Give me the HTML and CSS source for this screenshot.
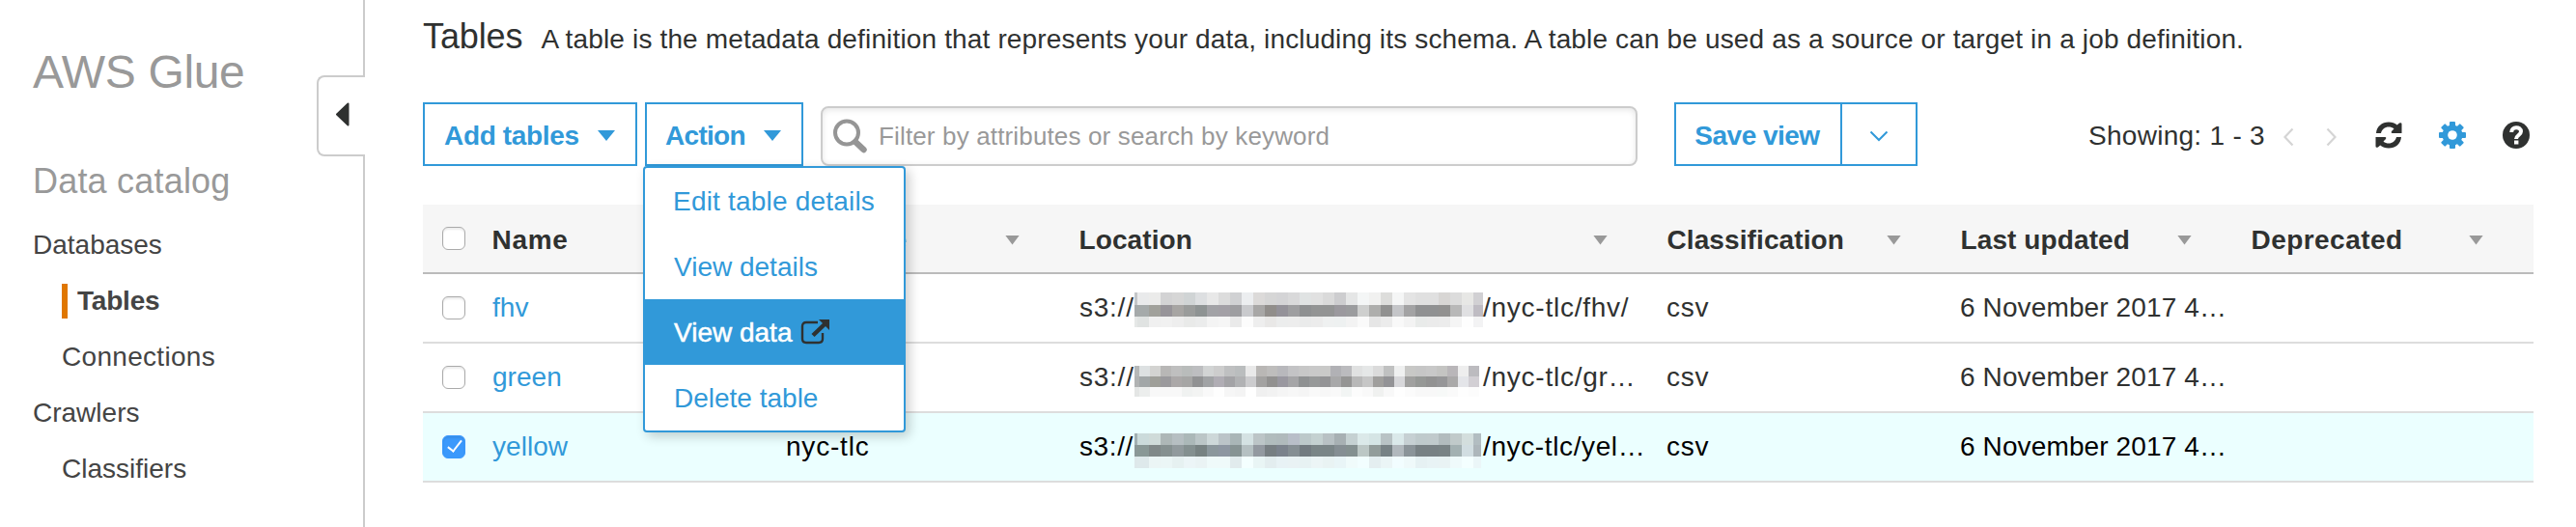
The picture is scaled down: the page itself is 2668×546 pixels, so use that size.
FILE: index.html
```
<!DOCTYPE html>
<html lang="en">
<head>
<meta charset="utf-8">
<title>AWS Glue – Tables</title>
<link rel="stylesheet" href="styles.css">
</head>
<body>
<aside class="sidebar">
  <h1 class="brand">AWS Glue</h1>
  <button class="collapse" aria-label="Collapse">
    <svg width="14" height="25" viewBox="0 0 14 25"><path d="M12.500 1.500v22L1 12.500z" fill="#2f3130" stroke="#2f3130" stroke-width="2" stroke-linejoin="round"/></svg>
  </button>
  <h2 class="group">Data catalog</h2>
  <nav class="nav">
    <a>Databases</a>
    <a class="sub active">Tables</a>
    <a class="sub wide">Connections</a>
    <a>Crawlers</a>
    <a class="sub">Classifiers</a>
  </nav>
</aside>
<main class="main">
  <header class="intro"><h2 class="title">Tables</h2><p class="desc">A table is the metadata definition that represents your data, including its schema. A table can be used as a source or target in a job definition.</p></header>
  <div class="toolbar">
    <button class="btn add">Add tables<i class="caret"></i></button>
    <div class="dropdown">
      <button class="btn action">Action<i class="caret"></i></button>
      <ul class="menu">
        <li>Edit table details</li>
        <li class="tight">View details</li>
        <li class="current">View data
          <svg width="32" height="28" viewBox="0 0 32 28" fill="none" stroke="#2f3130"><path d="M18 4H6Q2 4 2 8v13q0 4 4 4h13q4 0 4-4v-6" stroke-width="2.400"/><path d="M13 17.500L25 6" stroke-width="4.500"/><path d="M19 1h11v11z" fill="#2f3130" stroke="none"/></svg>
        </li>
        <li class="tight">Delete table</li>
      </ul>
    </div>
    <label class="search">
      <svg width="36" height="36" viewBox="0 0 36 36" fill="none" stroke="#959595"><circle cx="14" cy="14.500" r="12" stroke-width="4"/><path d="M23 24l8.500 8" stroke-width="6.500" stroke-linecap="round"/></svg>
      <span>Filter by attributes or search by keyword</span>
    </label>
    <div class="split"><button class="save">Save view</button><button class="more" aria-label="More"><svg width="20" height="12" viewBox="0 0 20 12" fill="none" stroke="#3199d9" stroke-width="2"><path d="M1.500 1.500L10 10l8.500-8.500"/></svg></button></div>
    <div class="status">
      <span class="count">Showing: 1 - 3</span>
      <svg class="prev" width="11" height="20" viewBox="0 0 11 20" fill="none" stroke="#d5d5d5" stroke-width="2.200"><path d="M9.500 1.500L1.500 10l8 8.500"/></svg>
      <svg class="next" width="11" height="20" viewBox="0 0 11 20" fill="none" stroke="#d5d5d5" stroke-width="2.200"><path d="M1.500 1.500l8 8.500-8 8.500"/></svg>
      <svg class="refresh" width="28" height="28" viewBox="0 0 28 28" fill="#2f3130"><path d="M1 12C1.500 5 7 0.500 14 0.500c3.500 0 6.500 1 8.800 3L25 1.500Q27.500 0.500 27.500 2.500V12H17.500Q16 11.500 17 10l2.500-2.500C18 6 16 5.500 14 5.500c-4 0-7 2.500-8 6.500z"/><path d="M27 16C26.500 23 21 27.500 14 27.500c-3.500 0-6.500-1-8.800-3L3 26.500Q0.500 27.500 0.500 25.500V16H10.500Q12 16.500 11 18l-2.500 2.500C10 22 12 22.500 14 22.500c4 0 7-2.500 8-6.500z"/></svg>
      <svg class="gear" width="28" height="28" viewBox="-14 -14 28 28" fill="#3199d9"><rect x="-3" y="-14" width="6" height="28" rx="1"/><rect x="-14" y="-3" width="28" height="6" rx="1"/><rect x="-3" y="-14" width="6" height="28" rx="1" transform="rotate(45)"/><rect x="-3" y="-14" width="6" height="28" rx="1" transform="rotate(-45)"/><circle r="10.500"/><circle r="4.800" fill="#fff"/></svg>
      <svg class="help" width="28" height="28" viewBox="0 0 28 28"><circle cx="14" cy="14" r="14" fill="#2f3130"/><path d="M9.200 11C9 4.800 19 4.500 19 10.300c0 3.700-5 3.700-5 7.700" fill="none" stroke="#fff" stroke-width="4"/><path d="M12 19.500h4.400v4H12z" fill="#fff"/></svg>
    </div>
  </div>
  <section class="table">
    <div class="row head">
      <input type="checkbox" class="check" aria-label="Select all">
      <span class="cell name-h">Name</span>
      <span class="cell db-h">Database<i class="sort"></i></span>
      <span class="cell">Location<i class="sort"></i></span>
      <span class="cell">Classification<i class="sort"></i></span>
      <span class="cell">Last updated<i class="sort"></i></span>
      <span class="cell dep">Deprecated<i class="sort"></i></span>
    </div>
    <div class="row">
      <input type="checkbox" class="check" aria-label="Select fhv">
      <a class="cell link">fhv</a>
      <span class="cell db"></span>
      <span class="cell loc"><span class="scheme">s3://</span><svg class="mask" width="361" height="50" data-mask="fhv"></svg>/nyc-tlc/fhv/</span>
      <span class="cell csv">csv</span>
      <span class="cell date">6 November 2017 4…</span>
      <span class="cell"></span>
    </div>
    <div class="row">
      <input type="checkbox" class="check" aria-label="Select green">
      <a class="cell link">green</a>
      <span class="cell db"></span>
      <span class="cell loc"><span class="scheme">s3://</span><svg class="mask" width="361" height="50" data-mask="green"></svg>/nyc-tlc/gr…</span>
      <span class="cell csv">csv</span>
      <span class="cell date">6 November 2017 4…</span>
      <span class="cell"></span>
    </div>
    <div class="row selected">
      <input type="checkbox" class="check" aria-label="Select yellow" checked>
      <a class="cell link">yellow</a>
      <span class="cell db">nyc-tlc</span>
      <span class="cell loc"><span class="scheme">s3://</span><svg class="mask" width="361" height="50" data-mask="yellow"></svg>/nyc-tlc/yel…</span>
      <span class="cell csv">csv</span>
      <span class="cell date">6 November 2017 4…</span>
      <span class="cell"></span>
    </div>
  </section>
</main>
<script src="mask.js"></script>
</body>
</html>
```
FILE: mask.js
```
// Pixelated masks over the private bucket names: one colour per mosaic block.
const masks = {
  fhv: { x: 3, step: 12, end: 361, ys: [9, 22, 34, 45], edge: ['c4c6c8', 'a5a9aa', 'e6e8e7'], rows: [
    'e9eaeb,ebebea,d3d3d4,d6d6d6,d0d4d5,dddfe1,e8e8e8,dcdcdc,d0d1d3,eceef0,dcdad9,d6d6d6,d4d4d6,d9d9da,e0e3e3,e1e1e1,dadada,cdcdcf,e5e6e6,f4f6f6,f1f1f0,dddddb,f5f6f6,e4e4e4,e0e0e0,e0e0e0,d8d6d4,dcdcdc,e7e7e5,d1d0d3',
    'a5aaaa,a1a19b,979499,a7a5a3,9a9c9b,8e9393,a2a2a6,a3a0a6,9e9ea1,c9cacd,a8a7a6,918e8b,949299,9e9ea0,8e9091,939494,939494,9b999e,9b9c9e,cecfce,aeaeac,919190,c4c5c8,a3a3a4,909192,909192,929190,b8b8b8,e0e0e2,bfbcc3',
    'e0e3e2,f0f0f0,f1f1f1,eeeeee,e9eae9,ebecec,f4f4f4,f6f6f6,eaeaea,fcfcfc,eeeeee,e9e8e7,eceded,ededed,eaebeb,ececec,eff1f1,eef1f1,f3f3f3,fafafa,e6e6e6,ececec,f9f9f9,f3f3f3,e9ebea,ebebeb,ececec,f5f5f5,fefefe,f3f3f4'] },
  green: { x: 5, step: 11, end: 358, ys: [13, 24, 35, 45], edge: ['b6b8b8', 'b0b2b2', 'e4e6e5'], rows: [
    'dde1e2,d3d3d1,b8b7b6,bfbfbf,b9bcbb,bdbec0,d2d4d4,cdcdcd,bfc0c1,babdbe,e9e9e9,b9b7b5,bebdbc,b8b8bc,c3c3c5,c7c7c7,c9c9c9,c9c9c8,b1b1b5,bbbbbe,e0e1e1,e5e7e7,dbdbdb,c0c1c1,eff0f0,c8c8c6,c6c6c6,c8c8c8,c4c4c2,b9b6b9,eeeeee,bcbbbf',
    'a2a7a8,9f9f99,9b9a9d,aba8a8,a6a6a5,919293,a1a3a5,b0adb4,a3a3a6,b1b2b4,ccccce,a3a2a1,929190,9a98a0,a5a5a7,8f9192,979999,939395,a8a8a9,959594,b8b8b8,c6c6c6,a09f9d,939396,d7d7da,a0a09f,969896,929292,969698,aaa9a9,e4e5e9,d2cfd4',
    'eceeed,f8f8f8,f8f8f8,f8f8f8,f0f2f1,f3f4f3,f9f9f9,fefefe,f6f6f6,f4f4f4,ffffff,f0f0f0,f2f2f2,f5f5f5,f7f7f7,f5f5f5,f9f9f9,f7f7f7,f9f9f9,f2f5f4,fcfcfc,f9f9f9,f0f1f0,f8f8f8,fefefe,fbfbfb,f8f8f8,f8f8f8,f7f9f8,fafafa,fefefe,fcfcfc'] },
  yellow: { x: 3, step: 12, end: 359, ys: [11, 23, 35, 47], edge: ['a2b0b2', '8b9797', 'dee8ea'], rows: [
    'cbdbdb,cfdbd9,adb7b7,b6bfc2,abb8b8,bbc6c7,cdd8d9,bbc4c8,a9b6b7,d4e2e3,bcc5c7,b1bcbd,b0babc,b8bec8,bcc9ca,c4d1d1,b8c1c4,a7b0b3,c5d1d2,dbe9e9,d5e5e5,b8c3c5,dae9ea,c6d0d3,bfcacc,c0cacc,b2bcbe,c0caca,d3dedd,b2bdc1',
    '899896,808888,859090,919a9d,849090,778282,8b979c,8d96a1,869393,b5c0c2,9399a0,777e82,7b828c,858e93,727b80,7a8587,7a8587,858e93,849090,bcc7c5,929c9a,778285,b1b8bd,8b9499,788184,788184,798385,a3b1b2,d1dde1,adb6bb',
    'dee9eb,ebf5f5,ebf6f6,e6f1f1,ecf5f7,eaf3f4,effafa,effafa,e1ebed,f4ffff,e9f5f5,e3edef,e8f2f5,e9f2f4,e7f2f3,ecf5f6,e9f3f3,e9f5f7,f0fbfb,f2feff,e4eef0,ebf5f6,f2fdff,eff9fa,e6f1f3,e8f3f5,e9f3f4,effafb,f4ffff,ebf6f8'] }
};
for (const svg of document.querySelectorAll('[data-mask]')) {
  const m = masks[svg.dataset.mask];
  const block = (x, y, w, h, fill) => {
    const r = document.createElementNS('http://www.w3.org/2000/svg', 'rect');
    for (const [k, v] of Object.entries({ x, y, width: w, height: h, fill: '#' + fill })) r.setAttribute(k, v);
    svg.append(r);
  };
  m.rows.forEach((row, j) => {
    const y = m.ys[j], h = m.ys[j + 1] - y;
    block(0, y, m.x, h, m.edge[j]);
    row.split(',').forEach((c, i) => {
      const x = m.x + i * m.step;
      block(x, y, Math.min(m.step, m.end - x), h, c);
    });
  });
}
```
FILE: styles.css
```
* { box-sizing: border-box; }
body {
  margin: 0;
  height: 546px;
  display: flex;
  overflow: hidden;
  background: #fff;
  color: #2f3130;
  font: 28px/34px "Liberation Sans", Arial, sans-serif;
  white-space: nowrap;
}
h1, h2, p, ul { margin: 0; padding: 0; font-weight: 400; }
button { font: inherit; background: #fff; padding: 0; color: #3199d9; }
svg { display: block; flex: none; }

.sidebar {
  position: relative;
  width: 378px;
  flex: none;
  padding: 47px 0 0 34px;
  border-right: 2px solid #ccc;
  color: #444;
}
.brand { font-size: 48px; line-height: 56px; letter-spacing: -.37px; color: #999; }
.collapse {
  position: absolute;
  top: 78px;
  right: -2px;
  width: 50px;
  height: 84px;
  padding: 0 0 3px 18px;
  border: 2px solid #ccc;
  border-right: 0;
  border-radius: 8px 0 0 8px;
}
.group { margin-top: 63px; font-size: 36px; line-height: 44px; letter-spacing: .2px; color: #999; }
.nav { margin-top: 27px; display: flex; flex-direction: column; align-items: flex-start; gap: 24px; }
.nav a { letter-spacing: 0; }
.nav .sub { margin-left: 30px; }
.nav .wide { letter-spacing: .3px; }
.nav .active { margin: -1px 0 -1px 30px; padding-left: 10px; border-left: 6px solid #e07700; line-height: 36px; font-weight: 700; letter-spacing: -.21px; }

.main { flex: 1; padding: 16px 44px 0 60px; }
.intro { display: flex; align-items: baseline; gap: 19px; height: 90px; }
.title { font-size: 36px; line-height: 44px; letter-spacing: -.11px; }
.desc { letter-spacing: .15px; }

.toolbar { display: flex; height: 66px; }
.btn { display: flex; align-items: center; justify-content: space-between; height: 66px; border: 2px solid #3199d9; font-weight: 700; }
.add { width: 222px; padding: 3px 21px 0 20px; letter-spacing: -.34px; }
.dropdown { position: relative; margin-left: 8px; }
.action { width: 164px; padding: 3px 21px 0 19px; letter-spacing: -.7px; }
.caret { width: 18px; height: 11px; background: #3199d9; clip-path: polygon(0 0, 100% 0, 50% 100%); }
.menu {
  position: absolute;
  z-index: 2;
  top: 66px;
  left: -2px;
  width: 272px;
  list-style: none;
  background: #fff;
  border: 2px solid #3199d9;
  border-radius: 4px;
  color: #3199d9;
  box-shadow: 4px 4px 12px rgba(0, 0, 0, .2);
}
.menu li { height: 68px; padding-left: 29px; line-height: 69px; letter-spacing: .2px; }
.menu .tight { padding-left: 30px; letter-spacing: 0; }
.menu .current { display: flex; align-items: center; gap: 9px; padding-left: 30px; background: #3199d9; color: #fff; letter-spacing: 0; -webkit-text-stroke: .5px #fff; }

.search {
  display: flex;
  align-items: center;
  width: 846px;
  height: 62px;
  margin: 4px 0 0 18px;
  padding-left: 11px;
  gap: 11px;
  border: 2px solid #ccc;
  border-radius: 8px;
  box-shadow: inset 0 2px 6px rgba(0, 0, 0, .1);
  color: #999;
  font-size: 26px;
  letter-spacing: .15px;
}
.split { display: flex; width: 252px; margin-left: 38px; border: 2px solid #3199d9; }
.split button { border: 0; }
.split .save { width: 172px; padding: 3px 2px 0 0; border-right: 2px solid #3199d9; font-weight: 700; letter-spacing: -.51px; }
.more { flex: 1; display: flex; justify-content: center; align-items: center; padding-top: 4px; }
.status { display: flex; flex: 1; align-items: center; padding-left: 177px; }
.count { width: 202px; padding-top: 3px; letter-spacing: .28px; }
.prev, .next { margin-top: 5px; }
.next { margin-left: 33px; }
.refresh { margin: 2px 0 0 40px; }
.gear, .help { margin: 2px 0 0 38px; }

.table { margin-top: 40px; }
.row {
  display: grid;
  grid-template-columns: 70px 305px 303px 609px 304px 301px 294px;
  height: 72px;
  align-items: center;
  border-bottom: 2px solid #ddd;
}
.head { background: #f6f6f6; border-color: #bbb; font-weight: 700; letter-spacing: .1px; }
.cell { display: flex; align-items: center; padding-left: 1px; }
.head .cell { padding: 3px 60px 0 1.500px; justify-content: space-between; }
.head .name-h { letter-spacing: .7px; }
.head .db-h { letter-spacing: 0; }
.head .dep { padding-right: 52px; letter-spacing: .45px; }
.sort { width: 15px; height: 10px; background: #999; clip-path: polygon(0 0, 100% 0, 50% 100%); }
.selected { background: #ebffff; color: #000; }
.link { padding-left: 2px; color: #3199d9; letter-spacing: .05px; }
.db, .csv { letter-spacing: .8px; }
.loc { height: 50px; padding-left: 2px; letter-spacing: .75px; }
.selected .loc { letter-spacing: .62px; }
.scheme { width: 57px; }
.date { letter-spacing: .12px; }
.check {
  appearance: none;
  width: 24px;
  height: 24px;
  margin: 0 0 0 20px;
  border: 1.500px solid #aaa;
  border-radius: 6px;
  background: #fff;
  box-shadow: inset 0 2px 2px rgba(0, 0, 0, .08);
}
.check:checked { position: relative; border-color: #3b99fc; background: #3b99fc; }
.check:checked::after {
  content: "";
  position: absolute;
  left: 8px;
  top: 1px;
  width: 6px;
  height: 13px;
  border: solid #fff;
  border-width: 0 2.500px 2.500px 0;
  transform: rotate(38deg);
}
```
